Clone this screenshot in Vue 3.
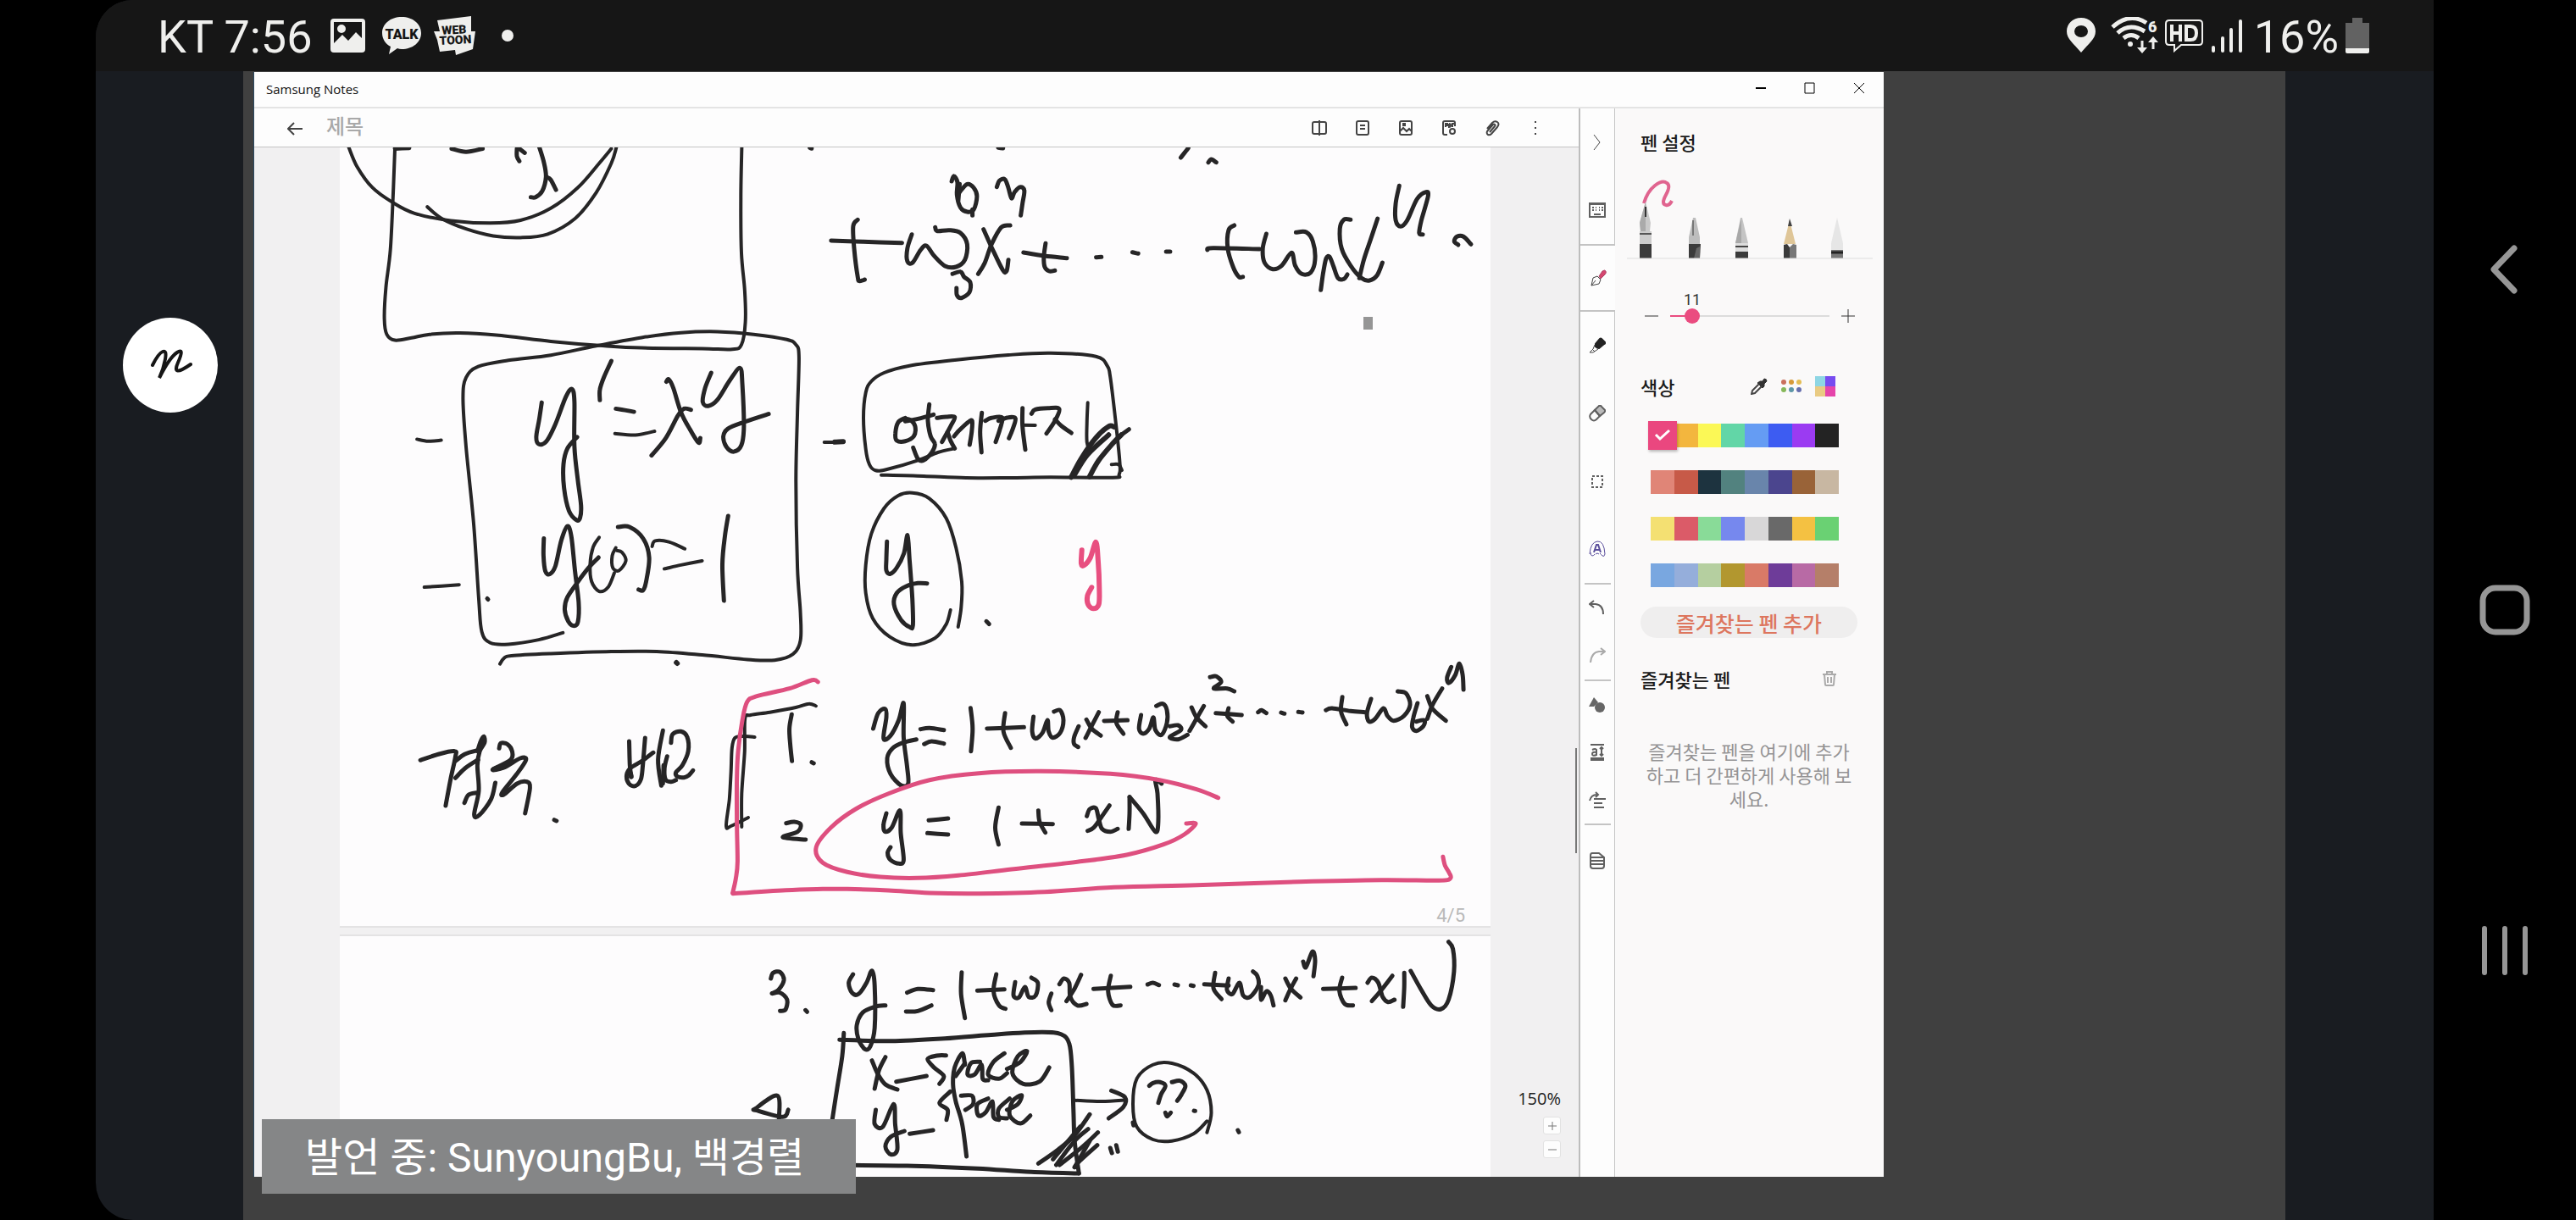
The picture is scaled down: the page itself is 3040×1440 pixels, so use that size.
<script setup>
import { ref } from 'vue'

const INK = '#262526'
const PINK = '#de4f7f'

// Each block of ink has its own origin and scale; strokes are point lists
// written as "x,y x,y ...", optionally prefixed with "width|".
function pen(ox, oy, sx, sy, color, list) {
  return list.map((raw) => {
    const [head, tail] = raw.includes('|') ? raw.split('|') : ['', raw]
    const pts = tail.trim().split(/\s+/).map((p) => {
      const [x, y] = p.split(',').map(Number)
      return [ox + x / sx, oy + y / sy]
    })
    return { d: smooth(pts), color, w: head ? Number(head) : 5 }
  })
}

function smooth(p) {
  const f = (n) => n.toFixed(1)
  let d = `M${f(p[0][0])} ${f(p[0][1])}`
  if (p.length === 1) return d + 'l1 1'
  for (let i = 0; i < p.length - 1; i++) {
    const a = p[i - 1] || p[i]
    const b = p[i]
    const c = p[i + 1]
    const e = p[i + 2] || c
    d += `C${f(b[0] + (c[0] - a[0]) / 6)} ${f(b[1] + (c[1] - a[1]) / 6)} `
    d += `${f(c[0] - (e[0] - b[0]) / 6)} ${f(c[1] - (e[1] - b[1]) / 6)} ${f(c[0])} ${f(c[1])}`
  }
  return d
}

const pageFour = [
  // diagram at the top and the boxed initial value problem
  ...pen(400, 160, 2.8, 2.45, INK, [
    '4|32,33 60,90 110,150 175,192 250,225 370,246 500,253 600,245 700,210 790,150 860,80 900,38',
    '4|292,206 340,240 420,270 510,290 600,295 690,285 780,240 850,165 900,80 917,33',
    '4|185,33 180,150 170,330 155,440 150,530 158,575 185,592 240,585 300,575 400,571 520,577 700,595 860,607 1000,614 1200,616 1300,618 1330,605 1343,540 1341,450 1330,340 1328,180 1331,33',
    '185,38 232,36',
    '372,38 420,47 475,38',
    '588,38 588,60 596,74',
    '596,38 614,50',
    '662,33 678,80 684,120 672,160 650,178 634,178',
    '686,120 700,128 717,157',
    '4|740,1438 660,1458 560,1471 500,1467 472,1435 462,1340 445,1120 420,900 410,760 420,700 460,668 560,650 700,635 850,608 1000,584 1130,570 1250,567 1370,575 1480,590 1510,605 1520,640 1515,800 1510,1000 1515,1250 1525,1380 1525,1460 1500,1500 1440,1517 1350,1515 1200,1502 1050,1492 900,1492 700,1498 570,1504 545,1512 532,1528',
    '670,772 662,820 652,870 660,892 685,885 715,835 750,755 770,733 778,770 778,900 790,1000 800,1070 797,1105 785,1112 760,1085 744,1020 742,950 755,905 787,872',
    '900,652 875,700 862,735 862,765',
    '915,790 945,794 975,799',
    '4|912,862 980,866 1043,855',
    '1082,712 1090,705 1105,730 1130,800 1160,850 1188,888 1194,875',
    '1033,925 1080,875 1120,810 1140,790 1163,793',
    '1230,686 1210,730 1202,770 1220,782 1250,765 1290,710 1325,672 1333,720 1338,840 1330,895 1305,914 1280,900 1270,870 1285,848 1340,828 1420,805',
    '4|258,878 295,884 338,881',
    '677,1165 676,1215 682,1260 697,1268 715,1245 735,1170 755,1130 768,1160 780,1260 792,1350 790,1405 777,1418 758,1405 746,1370 755,1335 790,1290 825,1250 858,1220',
    '4|860,1162 840,1190 830,1240 835,1290 860,1318 890,1305 910,1265',
    '4|915,1192 903,1215 905,1250 925,1258 948,1230 935,1205 918,1200',
    '922,1132 960,1132 1005,1165 1025,1220 1015,1290 1005,1315 990,1313',
    '4|1035,1188 1045,1172 1090,1175 1143,1195',
    '4|1075,1253 1130,1242 1200,1230',
    '1286,1100 1275,1160 1267,1240 1272,1345',
    '4|282,1306 397,1299',
    '490,1339',
    '6|1115,1524'
  ]),
  // power series, first line
  ...pen(940, 160, 1.912, 3, INK, [
    '78,372 150,376 238,380',
    '138,298 128,320 130,400 138,500 142,515 154,510',
    '260,350 250,400 250,445 262,450 280,405 293,390 310,425 335,462 360,465 380,440 385,385 370,345 345,335 318,338 313,325',
    '422,332 440,395 465,475 474,480 478,440',
    '482,318 462,325 440,385 425,450 410,490',
    '350,162 355,143 363,165 362,210 370,255 385,270 400,262 407,215 400,185 385,172 368,200',
    '368,172 365,230',
    '397,262 397,283',
    '452,182 458,160 470,155 478,185 485,222 492,200 505,182 514,195 510,240 506,283',
    '352,490 370,482 378,500 392,520 390,555 372,575 362,565 361,540',
    '512,414 560,426 610,434',
    '562,382 558,430 560,465 570,480 583,478',
    '676,431 688,430',
    '758,413 771,418',
    '834,411 843,411',
    '927,405 940,398 1045,402',
    '988,318 975,335 973,400 985,465 998,500 1007,500',
    '1060,348 1052,400 1056,450 1075,473 1095,460 1117,415 1125,460 1140,490 1160,485 1170,440 1165,375 1150,342 1127,343',
    '1183,547 1188,490 1195,435 1203,430 1212,465 1222,505 1235,508 1243,492',
    '1250,298 1235,298 1226,330 1230,400 1250,460 1275,505 1293,513 1310,495 1322,450',
    '1311,294 1295,370 1280,440 1270,505',
    '1360,178 1352,240 1352,300 1363,322 1378,300 1400,225 1420,200 1425,215 1410,300 1405,345 1413,350',
    '1493,387 1484,375 1490,358 1505,358 1522,385',
    '884,44 867,78',
    '929,95 936,84 947,95',
    '30,43 34,46',
    '455,43 466,45'
  ]),
  // boxed note and the circled y
  ...pen(940, 400, 3, 3, INK, [
    '4|300,482 450,486 600,492 750,492 900,490 1120,491 1142,480 1144,430 1125,250 1110,130 1100,95 1060,62 900,50 750,57 560,75 400,95 310,120 265,150 245,190 237,280 245,390 258,445 280,466 320,462 430,430 500,402 560,388',
    '4|98,366 130,366 168,364',
    '6|135,365 165,364',
    '385,280 360,295 350,335 355,360 385,362 415,345 420,310 405,288 385,282',
    '385,292 430,283 485,268',
    '470,232 465,290 475,345 490,372 480,400 450,430 430,425 413,385',
    '497,280 530,276 560,277 545,310 515,365',
    '535,330 545,360 560,388',
    '558,345 575,325 610,293 622,292 620,330 613,375',
    '656,262 650,330 655,402',
    '668,290 690,280 728,278 720,320 705,365',
    '715,290 750,278 775,282 765,320 752,352',
    '800,245 800,310 810,392',
    '4|800,305 845,306',
    '832,265 845,250 890,245 930,248 915,290 885,335',
    '915,285 940,310 973,333',
    '4|1031,226 1028,300 1028,365 1038,395',
    '6|972,490 1010,420 1060,350 1105,310 1125,312',
    '6|985,480 1030,410 1105,340',
    '6|1037,488 1070,430 1120,370 1150,340',
    '1150,340 1177,320',
    '4|1115,445 1140,445 1152,465',
    '4|545,960 530,1010 490,1060 410,1084 330,1055 270,990 245,900 245,800 265,690 310,600 360,555 410,545 470,565 530,635 565,740 585,860 583,950 572,1020',
    '320,718 318,780 318,820 332,832 355,810 380,760 393,695 400,780 410,920 412,1015 400,1020 370,995 345,940 355,900 390,875 430,865 462,866',
    '672,1000 682,1010'
  ]),
  // conclusion
  ...pen(480, 770, 2.613, 3, INK, [
    '42,382 100,360 148,350 150,370 135,450 120,543',
    '150,385 180,360 218,347',
    '150,445 180,410 220,380',
    '218,350 228,315 238,298 240,320 225,350 218,400 222,490 208,575 225,575 260,520 273,462',
    '178,533 190,505 215,497',
    '285,340 290,322 310,325 325,350 320,380 265,415 300,408 350,375 368,380 340,430 295,495 300,503 340,465 370,458 380,480 365,570',
    '6|270,413 300,405',
    '455,593 462,597',
    '686,315 688,400 692,435',
    '735,303 728,400 722,450 705,473 685,465 678,435 690,410 725,385 760,355',
    '6|688,425 692,440',
    '790,277 775,380 785,472',
    '815,320 820,290 845,280 865,300 868,350 850,400 830,425 835,440 855,443 870,435 883,418',
    '803,368 795,410 798,450 815,458 830,452',
    '792,400 790,465',
    '4|1262,190 1240,182 1200,195 1120,212 1060,222 1043,235 1042,350 1033,500 1033,618',
    '4|1073,300 1040,297 1012,303 1003,340 1000,420 995,520 985,615 1000,615 1053,585',
    '1187,220 1180,270 1183,330 1188,385',
    '1249,389 1255,393',
    '1170,605 1195,600 1215,610 1205,635 1160,655 1230,663'
  ]),
  ...pen(1000, 770, 2.063, 3, INK, [
    '63,270 75,215 92,200 95,230 88,305 105,295 125,240 137,180 137,300 145,400 148,465 130,470 105,430 97,375 110,340 135,320 168,308',
    '178,272 200,268 235,275',
    '187,325 205,315 235,323',
    '300,197 305,270 301,350',
    '340,270 430,265',
    '384,215 380,280 398,338',
    '453,228 450,280 458,305 475,285 487,240 490,280 500,302 518,285 526,240 518,205 503,210',
    '563,262 552,300 552,325 562,335',
    '582,238 595,270 617,295',
    '612,212 595,260 580,303',
    '625,243 682,240',
    '658,212 655,250 672,288',
    '715,222 710,270 720,288 735,270 745,230 750,275 765,292 778,250 778,205 768,182 752,190',
    '785,262 805,258 812,275 785,300 805,308 828,292',
    '838,195 850,230 872,262',
    '868,190 850,235 833,278',
    '883,88 898,85 910,105 892,128 925,128 942,138',
    '897,215 960,222',
    '928,198 925,225 938,245',
    '1000,212 1008,205 1020,215',
    '1056,213 1064,217',
    '1098,211 1108,213',
    '1165,205 1180,198 1225,208 1260,212',
    '1205,158 1202,210 1215,255',
    '1275,165 1265,215 1270,245 1285,235 1305,198 1315,225 1330,242 1355,225 1370,185 1360,145 1340,138',
    '1388,180 1378,230 1375,265 1385,278 1402,262 1405,240 1385,245',
    '1412,155 1425,200 1457,242',
    '1448,128 1425,185 1412,235',
    '1470,52 1460,90 1465,108 1480,80 1490,40 1498,80 1500,132',
    '95,570 88,610 92,635 108,620 128,560 130,640 137,735 125,748 105,735 98,710 105,690',
    '198,595 245,588',
    '195,640 245,645',
    '368,550 360,620 368,680',
    '425,606 500,608',
    '465,560 468,600 482,638',
    '583,580 590,555 605,552 612,590 620,625 640,635 658,625',
    '638,542 620,580 600,620 585,632',
    '685,625 687,570 687,512',
    '687,512 720,570 750,635 757,600 755,500 750,452 765,465'
  ]),
  // pink annotations
  ...pen(940, 400, 3, 3, '#e84f80', [
    '6|1010,748 1008,795 1018,802 1040,775 1060,720 1068,790 1072,880 1070,940 1050,955 1032,940 1030,910 1045,880'
  ]),
  ...pen(480, 770, 2.613, 3, PINK, [
    '1268,105 1250,98 1180,128 1080,155 1050,175 1035,240 1022,350 1018,450 1018,600 1020,740 1015,800 1005,852'
  ]),
  ...pen(1000, 770, 2.063, 3, PINK, [
    '-279,854 -150,842 -60,838 0,838 100,843 200,852 320,854 480,848 650,832 850,824 1100,812 1300,806 1440,808 1468,800 1465,780 1455,755 1450,724',
    '903,515 850,485 760,452 640,430 470,421 320,428 200,452 100,500 20,555 -40,620 -76,690 -60,745 0,778 80,795 170,799 270,790 400,768 560,742 680,717 770,680 820,645 848,607 825,606'
  ])
]

const pageFive = pen(860, 1080, 1.568, 3, INK, [
  '78,225 82,205 95,202 102,230 92,265 80,278 95,275 108,300 105,335 95,340',
  '142,337 145,343',
  '230,210 222,240 228,275 240,280 255,240 265,197 270,250 270,400 262,465 252,475 240,440 237,390 248,345 270,325 290,320',
  '330,275 350,262 378,266',
  '328,342 350,340 375,320',
  '431,203 430,280 437,365',
  '460,268 510,263',
  '495,210 490,270 500,320 512,332',
  '530,238 527,285 537,292 548,255 555,290 568,285 572,240 560,222',
  '597,278 592,310 597,337',
  '612,245 620,225 630,240 632,290 645,320 662,315',
  '652,212 640,260 625,305',
  '675,262 743,254',
  '707,215 702,270 710,318 725,320',
  '775,246 785,240 796,248',
  '825,246 831,249',
  '855,249 860,251',
  '880,245 925,250',
  '900,205 897,260 912,298',
  '925,225 922,265 932,280 945,240 952,285 965,290 980,250 978,215 970,200',
  '985,255 985,300 995,270 1003,285 1008,320',
  '1030,225 1040,260 1058,292',
  '1050,225 1040,260 1030,302',
  '1063,165 1068,185 1080,130 1085,160 1082,217',
  '1100,262 1160,258',
  '1135,222 1130,270 1140,315 1155,320',
  '1182,240 1190,222 1202,240 1210,290 1220,308 1232,300',
  '1228,215 1210,260 1190,305',
  '1248,325 1250,255 1250,205',
  '1262,198 1280,260 1300,320 1318,333 1332,300 1342,200 1340,120 1332,95',
  '213,418 210,500 200,620 190,745',
  '205,442 300,446 400,437 500,422 580,415 615,422 630,455 635,540 638,700 640,800 648,915',
  '648,915 560,910 460,898 330,888 200,886',
  '265,515 275,560 290,600 312,618',
  '290,503 278,550 270,615',
  '310,590 366,570',
  '402,497 385,498 368,510 380,540 398,570 390,598',
  '437,530 432,490 418,540 415,600 420,660 432,740 440,855',
  '437,525 420,570',
  '465,520 448,525 442,565 455,565 468,530 470,580 480,585',
  '510,490 490,520 480,565 500,580 515,560',
  '515,545 540,520 552,482 535,500 525,560 545,598 575,590 593,540',
  '272,690 270,740 285,750 305,670 308,740 312,830 300,848 290,820 300,785 325,765',
  '335,775 378,762',
  '410,625 390,665 405,690 403,725',
  '430,640 450,640 452,670 438,690',
  '480,650 460,670 462,710 475,700 488,660 490,715 500,725',
  '520,650 500,685 500,715 515,720',
  '515,690 535,670 542,638 525,660 520,710 540,738 558,710',
  '4|640,656 690,660 735,655',
  '708,622 733,645 730,680 703,720',
  '4|885,770 893,700 885,620 860,560 820,525 785,530 755,580 748,670 755,750 785,795 820,800 860,775 885,730',
  '748,735 749,745',
  '778,605 785,595 798,592 808,605 800,635 795,665',
  '820,592 835,587 845,605 838,635 830,658',
  '808,700 811,713 818,700',
  '861,693 863,694',
  '942,762 944,769',
  '668,706 640,780 610,830 573,880',
  '650,750 600,865',
  '665,758 640,800 606,885',
  '683,770 655,820 612,885',
  '668,800 640,893',
  '682,815 650,870 640,893',
  '706,825 709,843',
  '717,815 720,838',
  '110,690 100,715 52,692 50,685 90,640 93,725'
])

const tools = [
  { label: '두 페이지 보기', d: 'M10 3H4q-2 0-2 2v10q0 2 2 2h6zM10 3h6q2 0 2 2v10q0 2-2 2h-6zM10 1v18' },
  { label: '페이지', d: 'M5 2h10q2 0 2 2v12q0 2-2 2H5q-2 0-2-2V4q0-2 2-2zM7 7h6M7 11h6' },
  { label: '이미지', d: 'M5 2h10q2 0 2 2v12q0 2-2 2H5q-2 0-2-2V4q0-2 2-2zM3 14l4-4 4 4 3-3 3 3M7 5h2v2H7z' },
  { label: 'PDF', d: 'M8 18H5q-2 0-2-2V4q0-2 2-2h10q2 0 2 2v4M6 9V5h2v2H6M10 5v4q2 0 2-2t-2-2M14 9V5h2M11 14a3 3 0 1 0 6 0a3 3 0 1 0-6 0' },
  { label: '첨부', d: 'M4 11l6-7q3-3 6-1t0 6l-7 8q-2 2-4 1t-1-4l7-8q1-1 2 0t0 2l-6 7' },
  { label: '더보기', d: 'M9 3h2M9 10h2M9 17h2' }
]

const palette = [
  ['#ea477f', '#f3b63e', '#fbf856', '#62d6a7', '#659cf3', '#3d5cf2', '#9b3bf2', '#232323'],
  ['#e08577', '#c75a48', '#1d333f', '#52827f', '#6985ab', '#4b458e', '#996338', '#c8b7a2'],
  ['#f4e072', '#db5b68', '#89db98', '#7688ee', '#d8d7d8', '#696969', '#f4c142', '#6ad173'],
  ['#79a7e0', '#95aedb', '#b5cfa0', '#b2972f', '#d97a67', '#6e3c99', '#b86aa5', '#b57f69']
]

const title = ref('')
const thickness = ref(11)
</script>

<template>
  <div class="phone">
    <main class="device">
      <header class="status">
        <span class="status-text">KT 7:56</span>
        <svg class="s-img" width="42" height="42" viewBox="0 0 42 42" aria-hidden="true">
          <path fill="#efefed" fill-rule="evenodd" d="M4 1h33q4 0 4 4v32q0 4-4 4H4q-4 0-4-4V5q0-4 4-4zM4 5v25l10-10 7 7 9-10 7 7V5zM13 8a5 5 0 1 1 0 10a5 5 0 0 1 0-10z" />
        </svg>
        <svg class="s-talk" width="48" height="46" viewBox="0 0 48 46" aria-hidden="true">
          <path fill="#efefed" d="M24 1C11 1 1 9 1 20c0 7 4 13 10 16l-2 9 10-7q2 1 5 1c13 0 23-8 23-19S37 1 24 1z" />
          <text x="24" y="27" text-anchor="middle" font-size="16" fill="#161616">TALK</text>
        </svg>
        <svg class="s-toon" width="50" height="48" viewBox="0 0 50 48" aria-hidden="true">
          <path fill="#efefed" d="M4 6L44 1v18h5l-3 21-20 7-1-6-18 2-3-14-4-10h7z" />
          <g transform="rotate(-3 25 22)">
            <text x="24" y="22" text-anchor="middle" font-size="14" fill="#161616">WEB</text>
            <text x="25" y="34" text-anchor="middle" font-size="14" fill="#161616">TOON</text>
          </g>
        </svg>
        <i class="dot"></i>
        <span class="spring"></span>
        <svg width="44" height="44" viewBox="0 0 44 44" aria-hidden="true">
          <path fill="#efefed" fill-rule="evenodd" d="M17 1C7 1 0 8 0 17c0 9 8 14 17 25c9-11 17-16 17-25C34 8 27 1 17 1zm0 9a8 7 0 1 1 0 14a8 7 0 0 1 0-14z" />
        </svg>
        <svg width="56" height="44" viewBox="0 0 56 44" aria-hidden="true">
          <g fill="none" stroke="#efefed" stroke-width="5">
            <path d="M2 12Q22-6 42 7M8 19q14-13 32-2M15 25q9-7 18 0" />
            <path stroke-width="3" d="M37 28v12M50 38V26" />
          </g>
          <circle cx="23" cy="32" r="3" fill="#efefed" />
          <path fill="#efefed" d="M31 36h12l-6 7zM44 30h12l-6-7z" />
          <text x="44" y="18" font-size="18" fill="#efefed">6</text>
        </svg>
        <svg width="45" height="40" viewBox="0 0 45 40" aria-hidden="true">
          <path fill="none" stroke="#efefed" stroke-width="2" d="M5 2h35q4 0 4 4v21q0 4-4 4H19l-8 7v-7H5q-4 0-4-4V6q0-4 4-4z" />
          <path fill="none" stroke="#efefed" stroke-width="4" d="M8 7v20M18 7v20M8 17h10M25 9v16h5q7 0 7-8t-7-8z" />
        </svg>
        <svg width="40" height="42" viewBox="0 0 40 42" aria-hidden="true">
          <path stroke="#efefed" stroke-width="4" stroke-linecap="round" d="M4 35v4M15 24v15M25 14v25M36 4v35" />
        </svg>
        <span class="status-text percent">16%</span>
        <svg width="28" height="44" viewBox="0 0 28 44" aria-hidden="true">
          <path fill="#626262" d="M8 1h12v6h8v31H0V7h8z" />
          <path fill="#efefed" d="M0 37h28v4q0 2-2 2H2q-2 0-2-2z" />
        </svg>
      </header>

      <section class="stage">
        <aside class="side">
          <button class="draw" aria-label="그리기">
            <svg width="52" height="50" viewBox="0 0 52 50" aria-hidden="true">
              <path d="M5 25Q12 11 17 9t3 9-7 22Q25 16 34 10t1 12q-8 18 15 2" />
            </svg>
          </button>
        </aside>

        <div class="share">
          <article class="window">
            <header class="titlebar">
              <span class="app-name">Samsung Notes</span>
              <button class="win" aria-label="최소화"><svg width="14" height="14" viewBox="0 0 14 14"><path d="M1 7h12" stroke-width="2" /></svg></button>
              <button class="win" aria-label="최대화"><svg width="14" height="14" viewBox="0 0 14 14"><path d="M1 1h11v12H1z" /></svg></button>
              <button class="win" aria-label="닫기"><svg width="14" height="14" viewBox="0 0 14 14"><path d="M1 1l12 12M13 1L1 13" /></svg></button>
            </header>

            <div class="body">
              <div class="editor">
                <nav class="toolbar">
                  <button class="back" aria-label="뒤로"><svg width="18" height="16" viewBox="0 0 18 16"><path d="M8 1L1 8l7 7M1 8h17" /></svg></button>
                  <input v-model="title" class="title" type="text" placeholder="제목" aria-label="제목" />
                  <button v-for="t in tools" :key="t.label" class="tool" :aria-label="t.label">
                    <svg width="20" height="20" viewBox="0 0 20 20"><path :d="t.d" /></svg>
                  </button>
                </nav>

                <div class="canvas">
                  <div class="page">
                    <svg viewBox="401 174 1358 919" role="img" aria-label="필기 4쪽">
                      <rect x="1609" y="374" width="11" height="15" fill="#959595" />
                      <path v-for="(s, i) in pageFour" :key="i" :d="s.d" :stroke="s.color" :stroke-width="s.w" />
                    </svg>
                    <span class="folio">4/5</span>
                  </div>
                  <div class="page">
                    <svg viewBox="401 1105 1358 284" role="img" aria-label="필기 5쪽">
                      <path v-for="(s, i) in pageFive" :key="i" :d="s.d" :stroke="s.color" :stroke-width="s.w" />
                    </svg>
                  </div>
                  <i class="thumb"></i>
                  <div class="zoom">
                    <span>150%</span>
                    <button aria-label="확대"><svg width="10" height="10" viewBox="0 0 10 10"><path d="M5 0v10M0 5h10" /></svg></button>
                    <button aria-label="축소"><svg width="10" height="10" viewBox="0 0 10 10"><path d="M0 5h10" /></svg></button>
                  </div>
                </div>
              </div>

              <nav class="rail">
                <button aria-label="접기"><svg viewBox="0 0 20 20"><path class="thin" d="M6 1l7 9-7 9" /></svg></button>
                <button aria-label="키보드"><svg viewBox="0 0 20 20"><path d="M1 4V2h18v16H1V3h18" /><path d="M4 7h2M8 7h1M12 7h1M15 7h2M4 10h2M8 10h1M12 10h1M15 10h2M6 15h8" /></svg></button>
                <button class="active" aria-label="펜"><svg viewBox="0 0 20 20"><path class="rose" d="M11 8l4-6q3-2 4 0t-1 4l-5 5z" /><path class="thin" d="M9 8l4 4-2 5-9 2 2-9zM2 19l5-6" /></svg></button>
                <button aria-label="형광펜"><svg viewBox="0 0 20 20"><path class="black" d="M8 8l5-6q1-1 2 0l4 4q1 1-1 2l-6 5q-2 0-4-2z" /><path class="thin" d="M7 9l-2 5-4 4h4l3-2 3-2M4 14l3 3" /></svg></button>
                <button aria-label="지우개"><svg viewBox="0 0 20 20"><path class="gray" d="M7 6l5-5q2-1 3 1l4 4q1 1-1 3l-5 4z" /><path d="M7 6l6 7-4 4q-3 3-6 0t-1-6z" /></svg></button>
                <button aria-label="선택"><svg viewBox="0 0 20 20"><path d="M4 4h12v13H4z" stroke-dasharray="3 2" /></svg></button>
                <button class="violet" aria-label="변환"><svg viewBox="0 0 20 20"><path d="M6 14l3-9h2l3 9M7 11h6" /><path class="thin" d="M2 14q0 4 2 4t3-2M1 16Q2 2 10 1t9 15q-1 4-3 2t-3-3M8 16q2-2 4 0" /></svg></button>
                <hr />
                <button class="low" aria-label="실행 취소"><svg viewBox="0 0 20 20"><path d="M6 1L1 5l5 4M1 5h7q9 1 9 12" /></svg></button>
                <button class="low dim" aria-label="다시 실행"><svg viewBox="0 0 20 20"><path d="M14 1l5 4-5 4M19 5h-7q-9 1-10 13" /></svg></button>
                <hr />
                <button class="low" aria-label="도형"><svg viewBox="0 0 20 20"><path class="solid" d="M6 1l5 6-5 5-6 0z" /><circle cx="13" cy="13" r="6" fill="#666" /></svg></button>
                <button class="low" aria-label="글자 크기"><svg viewBox="0 0 20 20"><path d="M2 1h16M2 17h16M2 19h16M15 4v10M13 6l2-2 2 2M13 12l2 2 2-2M4 7q4-2 5 0v6q-5 2-5-1t5-2" /></svg></button>
                <button class="low" aria-label="정렬"><svg viewBox="0 0 20 20"><path d="M8 1l3 3-3 3M11 4Q3 3 1 11M6 9h14M6 14h10M6 19h12" /></svg></button>
                <hr />
                <button class="low last" aria-label="템플릿"><svg viewBox="0 0 20 20"><path d="M4 1h8l6 5v10q0 3-3 3H5q-3 0-3-3V4q0-3 2-3zM2 6h16M2 10h16M2 14h16" /></svg></button>
              </nav>

              <aside class="panel">
                <h2>펜 설정</h2>
                <svg class="pens" viewBox="1920 212 290 96" aria-label="펜 종류" role="img">
                  <path d="M1940 242q4-14 13-21t14-3q5 3-1 14t0 12q4 1 7-5" fill="none" stroke="#e0648f" stroke-width="4" />
                  <path d="M1942 240l6 25-1 10h-11l-1-10z" fill="#c9c9c9" />
                  <path d="M1942 240l-7 25 1 10h6z" fill="#aaa" />
                  <path d="M1942 246v12" stroke="#333" stroke-width="2" />
                  <path d="M1935 275h14v15h-14z" fill="#ccc" />
                  <path d="M1935 278h14" stroke="#555" stroke-width="2" />
                  <path d="M1935 290h14v17h-14z" fill="#3b3b3b" />
                  <path d="M1998 259h3l5 23v8h-13v-8z" fill="#bdbdbd" />
                  <path d="M1998 262v18" stroke="#333" stroke-width="1" />
                  <path d="M1993 290h14l-1 17h-13z" fill="#3b3b3b" /><path d="M2002 295l4-2v14h-7z" fill="#666" />
                  <path d="M2054 259h2l7 30h-15z" fill="#c4c4c4" /><path d="M2055 259v30h-7z" fill="#a8a8a8" />
                  <path d="M2048 289h15v10h-15z" fill="#ddd" /><path d="M2048 293h15" stroke="#444" stroke-width="2" />
                  <path d="M2048 299h15v8h-15z" fill="#3b3b3b" />
                  <path d="M2112 262l7 28h-14z" fill="#dfc698" /><path d="M2112 260l3 9h-5z" fill="#444" />
                  <path d="M2105 307v-16l4-1 3 4v13z" fill="#3b3b3b" /><path d="M2112 307v-13l4-4 4 1v16z" fill="#777" />
                  <path d="M2168 259l7 30v8h-14v-8z" fill="#e6e6e6" />
                  <path d="M2161 297h14v10h-14z" fill="#777" /><path d="M2161 300h14" stroke="#222" stroke-width="3" />
                  <path d="M1920 307h290" stroke="#ddd" stroke-width="1" />
                </svg>

                <div class="thickness">
                  <output for="thick">{{ thickness }}</output>
                  <div class="thick-row">
                    <button aria-label="얇게"><svg width="16" height="16" viewBox="0 0 16 16"><path d="M0 8h16" /></svg></button>
                    <input id="thick" v-model="thickness" type="range" min="1" max="100" aria-label="굵기" />
                    <button aria-label="굵게"><svg width="16" height="16" viewBox="0 0 16 16"><path d="M0 8h16M8 0v16" /></svg></button>
                  </div>
                </div>

                <div class="color-head">
                  <h2>색상</h2>
                  <button aria-label="스포이트"><svg width="20" height="20" viewBox="0 0 20 20"><path d="M11 4l3 0 2-3q3 0 3 3l-3 3v3l-2 2-6-6z" fill="#333" stroke="#333" /><path d="M10 7l-8 8-1 4 4-1 8-8" fill="none" stroke="#444" stroke-width="2" /></svg></button>
                  <button aria-label="색상표"><svg width="24" height="16" viewBox="0 0 24 16"><circle cx="3" cy="3" r="3" fill="#c9705d" /><circle cx="12" cy="3" r="3" fill="#d69a3a" /><circle cx="21" cy="3" r="3" fill="#e4bd55" /><circle cx="3" cy="12" r="3" fill="#86b85a" /><circle cx="12" cy="12" r="3" fill="#5d96a8" /><circle cx="21" cy="12" r="3" fill="#666fae" /></svg></button>
                  <button aria-label="색상 선택"><svg width="24" height="24" viewBox="0 0 24 24"><path d="M0 0h12v12H0z" fill="#8ed6e4" /><path d="M12 0h12v12H12z" fill="#774cf0" /><path d="M0 12h12v12H0z" fill="#e9cb83" /><path d="M12 12h12v12H12z" fill="#e545ab" /></svg></button>
                </div>

                <div class="palette">
                  <div v-for="(row, r) in palette" :key="r" class="swatches">
                    <button v-for="(c, i) in row" :key="c" :class="{ chosen: r === 0 && i === 0 }" :style="{ background: c }" :aria-label="c">
                      <svg v-if="r === 0 && i === 0" width="20" height="16" viewBox="0 0 20 16"><path d="M2 7l5 5L18 2" fill="none" stroke="#fff" stroke-width="3" /></svg>
                    </button>
                  </div>
                </div>

                <button class="add">즐겨찾는 펜 추가</button>

                <div class="fav-head">
                  <h2>즐겨찾는 펜</h2>
                  <button aria-label="삭제"><svg width="16" height="18" viewBox="0 0 16 18"><path d="M0 4h16M5 3V1h6v2M2 4l1 12q0 1 1 1h8q1 0 1-1l1-12M6 7v7M10 7v7" fill="none" stroke="#aaa" stroke-width="2" /></svg></button>
                </div>
                <p>즐겨찾는 펜을 여기에 추가하고 더 간편하게 사용해 보세요.</p>
              </aside>
            </div>
          </article>
          <div class="caption">발언 중: SunyoungBu, 백경렬</div>
        </div>
      </section>
    </main>

    <nav class="android">
      <button aria-label="뒤로"><svg viewBox="0 0 60 60"><path d="M41 5L17 30l24 25" /></svg></button>
      <button aria-label="홈"><svg viewBox="0 0 60 60"><rect x="4" y="4" width="52" height="52" rx="15" /></svg></button>
      <button aria-label="최근 앱"><svg viewBox="0 0 60 60"><path class="bars" d="M6 4v52M30 4v52M54 4v52" /></svg></button>
    </nav>
  </div>
</template>

<style>
body {
  margin: 0;
  background: #000;
}
</style>

<style scoped>
* {
  box-sizing: border-box;
}
button {
  padding: 0;
  border: 0;
  background: none;
  font: inherit;
  color: inherit;
}
h2,
p {
  margin: 0;
}
.phone {
  display: flex;
  min-height: 100vh;
  padding-left: 113px;
  background: #000;
  font-family: Roboto, "Noto Sans CJK KR", sans-serif;
}
.device {
  flex: 1;
  display: flex;
  flex-direction: column;
  overflow: hidden;
  border-radius: 44px 0 0 44px;
  background: #191c21;
}

.status {
  display: flex;
  align-items: center;
  gap: 8px;
  height: 84px;
  padding: 0 76px 0 73px;
  background: #161616;
}
.status-text {
  padding-top: 4px;
  font-size: 54px;
  line-height: 60px;
  color: #efefed;
}
.status-text.percent {
  margin-left: 4px;
}
.status text {
  font-family: Roboto, sans-serif;
  font-weight: 900;
}
.s-img {
  margin-left: 13px;
}
.s-talk {
  margin-left: 10px;
}
.s-toon {
  margin-left: 6px;
}
.dot {
  width: 14px;
  height: 14px;
  margin-left: 22px;
  border-radius: 50%;
  background: #efefed;
}
.spring {
  flex: 1;
}

.stage {
  flex: 1;
  display: flex;
  padding-right: 175px;
}
.side {
  width: 174px;
  padding: 291px 0 0 32px;
}
.draw {
  display: grid;
  place-items: center;
  width: 112px;
  height: 112px;
  border-radius: 50%;
  background: #fff;
}
.draw path {
  fill: none;
  stroke: #161616;
  stroke-width: 4;
  stroke-linecap: round;
}
.share {
  position: relative;
  flex: 1;
  padding: 1px 474px 51px 12px;
  background: #404040;
}

.window {
  display: flex;
  flex-direction: column;
  height: 100%;
  border-left: 1px solid #2c4a63;
  background: #fdfdfd;
}
.titlebar {
  display: flex;
  height: 43px;
  border-bottom: 2px solid #e4e4e4;
}
.app-name {
  flex: 1;
  padding-left: 14px;
  font: 15px/40px "Open Sans", sans-serif;
  color: #111;
}
.win {
  width: 58px;
}
.win path {
  fill: none;
  stroke: #000;
}
.body {
  flex: 1;
  display: flex;
}

.editor {
  flex: 1;
  display: flex;
  flex-direction: column;
}
.toolbar {
  display: flex;
  align-items: center;
  height: 46px;
  padding: 0 26px 0 23px;
  border-bottom: 1px solid #c4c4c4;
}
.toolbar svg {
  vertical-align: middle;
}
.toolbar svg path {
  fill: none;
  stroke: #444;
  stroke-width: 2;
}
.back {
  width: 50px;
  height: 40px;
}
.title {
  flex: 1;
  min-width: 0;
  padding: 0 0 6px 12px;
  border: 0;
  background: none;
  font: 500 24px/36px "Noto Sans CJK KR", sans-serif;
}
.title::placeholder {
  color: #a9a9a9;
}
.tool {
  width: 51px;
  height: 40px;
}

.canvas {
  position: relative;
  flex: 1;
  display: flex;
  flex-direction: column;
  gap: 12px;
  overflow: hidden;
  padding: 0 104px 0 101px;
  background: #f1f0f1;
}
.page {
  position: relative;
  background: #fdfcfd;
  box-shadow: 0 0 0 2px #e4e3e4;
  clip-path: inset(-2px 0);
}
.page svg {
  display: block;
  width: 100%;
}
.page path {
  fill: none;
  stroke-linecap: round;
  stroke-linejoin: round;
}
.folio {
  position: absolute;
  right: 30px;
  bottom: 0;
  font-size: 22px;
  line-height: 24px;
  color: #b9b9b9;
}
.thumb {
  position: absolute;
  right: 2px;
  top: 709px;
  width: 2px;
  height: 124px;
  background: #777;
}
.zoom {
  position: absolute;
  right: 21px;
  bottom: 22px;
  display: flex;
  flex-direction: column;
  align-items: flex-end;
  gap: 7px;
  font: 20px/28px "Open Sans", sans-serif;
  color: #222;
}
.zoom button {
  display: grid;
  place-items: center;
  width: 21px;
  height: 21px;
  border: 1px solid #e2e2e2;
  border-radius: 3px;
  background: #fdfdfd;
}
.zoom path {
  stroke: #777;
}

.rail {
  display: flex;
  flex-direction: column;
  width: 43px;
  border-left: 2px solid #bdbdbd;
}
.rail::after {
  content: "";
  flex: 1;
  border-right: 1px solid #c4c4c4;
}
.rail button {
  display: grid;
  place-items: center;
  height: 80px;
  border-right: 1px solid #c4c4c4;
}
.rail .active {
  border: solid #c4c4c4;
  border-width: 2px 0;
}
.rail .low {
  height: 56px;
}
.rail .last {
  height: 84px;
}
.rail svg {
  width: 20px;
  height: 20px;
}
.rail path {
  fill: none;
  stroke: #606060;
  stroke-width: 2;
}
.rail .thin {
  stroke-width: 1;
  stroke: #444;
}
.rail .solid {
  fill: #666;
  stroke: none;
}
.rail .gray {
  fill: #bbb;
}
.rail .black {
  fill: #222;
  stroke: #222;
}
.rail .rose {
  fill: #d5476f;
  stroke: #b04468;
  stroke-width: 1;
}
.rail .violet path {
  stroke: #5a4e9c;
}
.rail .dim path {
  stroke: #aaa;
}
.rail hr {
  width: 41px;
  height: 2px;
  margin: 0;
  border: 0;
  border-right: 1px solid #c4c4c4;
  background: linear-gradient(90deg, transparent 5px, #c4c4c4 5px, #c4c4c4 36px, transparent 36px);
}

.panel {
  display: flex;
  flex-direction: column;
  width: 317px;
  padding: 25px 13px 0 30px;
  background: #faf9f9;
  font-family: "Noto Sans CJK KR", sans-serif;
}
.panel h2 {
  font-size: 22px;
  line-height: 28px;
  font-weight: 500;
  color: #1c1c1c;
}
.pens {
  width: 290px;
  margin: 29px 0 0 -16px;
}
.thickness {
  margin-top: 38px;
}
.thickness output {
  display: block;
  width: 40px;
  margin-left: 41px;
  text-align: center;
  font: 18px/20px Roboto, sans-serif;
  color: #333;
}
.thick-row {
  display: flex;
  align-items: center;
  gap: 14px;
  height: 18px;
  padding-left: 5px;
}
.thick-row button {
  display: flex;
}
.thick-row path {
  stroke: #333;
}
.thick-row input {
  appearance: none;
  width: 188px;
  height: 18px;
  margin: 0;
  background: linear-gradient(90deg, #ea4c80 26px, #dcdcdc 26px) center / 100% 2px no-repeat;
}
.thick-row input::-webkit-slider-thumb {
  appearance: none;
  width: 18px;
  height: 18px;
  border-radius: 50%;
  background: #ea4c80;
}
.color-head {
  display: flex;
  align-items: center;
  gap: 16px;
  height: 28px;
  margin-top: 60px;
  padding-right: 44px;
}
.color-head h2 {
  flex: 1;
}
.color-head button,
.fav-head button {
  display: flex;
}
.palette {
  display: grid;
  gap: 27px;
  width: 222px;
  margin: 30px 0 0 12px;
}
.swatches {
  display: grid;
  grid-template-columns: repeat(8, 1fr);
  height: 28px;
}
.swatches .chosen {
  z-index: 1;
  display: grid;
  place-items: center;
  margin: -3px;
  box-shadow: 1px 2px 3px #0004;
}
.add {
  width: 256px;
  height: 37px;
  margin-top: 23px;
  border-radius: 19px;
  background: #efeeee;
  font-size: 25px;
  font-weight: 500;
  line-height: 36px;
  color: #dd765e;
}
.fav-head {
  display: flex;
  align-items: center;
  justify-content: space-between;
  margin-top: 34px;
  padding-right: 43px;
}
.panel p {
  width: 256px;
  margin-top: 57px;
  text-align: center;
  word-break: break-all;
  font-size: 22px;
  line-height: 28px;
  color: #949394;
}

.caption {
  position: absolute;
  left: 22px;
  bottom: 31px;
  width: 701px;
  height: 88px;
  padding-left: 51px;
  background: #858687;
  font-size: 48px;
  line-height: 92px;
  white-space: nowrap;
  color: #fff;
}

.android {
  display: flex;
  flex-direction: column;
  justify-content: space-between;
  align-items: center;
  width: 168px;
  padding: 20vh 0;
}
.android button {
  display: flex;
}
.android svg {
  width: 60px;
  height: 60px;
}
.android path,
.android rect {
  fill: none;
  stroke: #969696;
  stroke-width: 7;
  stroke-linecap: round;
  stroke-linejoin: round;
}
.android .bars {
  stroke-width: 6;
}
</style>
